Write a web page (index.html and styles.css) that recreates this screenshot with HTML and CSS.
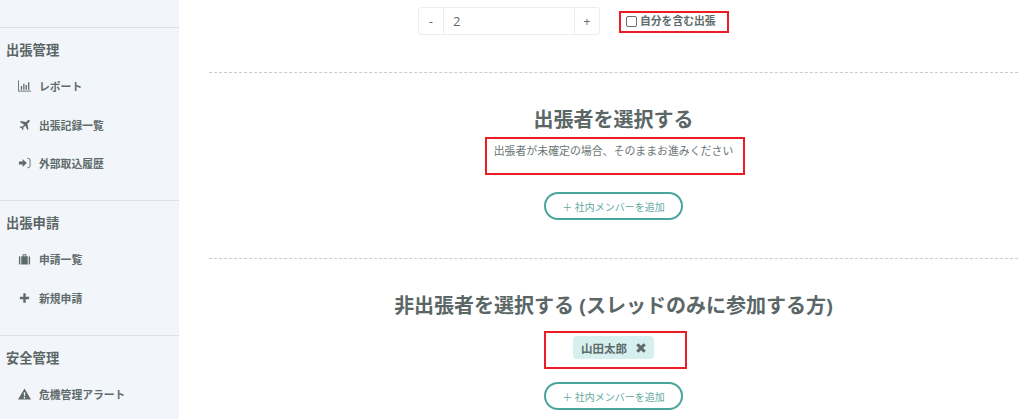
FILE: index.html
```html
<!DOCTYPE html>
<html lang="ja">
<head>
<meta charset="utf-8">
<title>出張者を選択する</title>
<link rel="stylesheet" href="styles.css">
</head>
<body>
<div class="app">
  <aside class="sidebar">
    <section class="group">
      <h3 class="group-title">出張管理</h3>
      <a class="item"><svg class="icon" viewBox="0 0 14 12"><path d="M.5 0v11.500H14" fill="none" stroke="currentColor"/><path d="M3 6h1.400v4H3zM5.600 3.500H7V10H5.600zM8.200 5h1.400v5H8.200zM10.800 2h1.400v8h-1.400z" fill="currentColor"/></svg>レポート</a>
      <a class="item"><svg class="icon" viewBox="0 0 14 14"><path d="M12.700 1.200c.7.700.3 1.800-.4 2.500L10.400 5.600l1.200 6-1.100 1.100-2.700-4.900-2.400 2.400.4 2-.9.900-1.200-2.400-2.400-1.200.9-.9 2 .4 2.400-2.400L1.700 3.500l1.100-1.100 6 1.200 1.900-1.900c.7-.7 1.300-1.200 2-.5z" fill="currentColor"/></svg>出張記録一覧</a>
      <a class="item"><svg class="icon" viewBox="0 0 14 12"><path d="M1 4.300h4V1.800l4.500 4.200L5 10.200V7.700H1z" fill="currentColor"/><path d="M10 1h1.200A1.800 1.800 0 0 1 13 2.800v6.400A1.800 1.800 0 0 1 11.200 11H10" fill="none" stroke="currentColor"/></svg>外部取込履歴</a>
    </section>
    <section class="group">
      <h3 class="group-title">出張申請</h3>
      <a class="item"><svg class="icon" viewBox="0 0 14 12"><path d="M5 1h4v2H8V2H6v1H5zM1 4a1 1 0 0 1 1-1h.5v9H2a1 1 0 0 1-1-1zM3.500 3h7v9h-7zM11.500 3h.5a1 1 0 0 1 1 1v7a1 1 0 0 1-1 1h-.5z" fill="currentColor"/></svg>申請一覧</a>
      <a class="item"><svg class="icon" viewBox="0 0 14 12"><path d="M5.700 1h2.600v3.700H12v2.600H8.300V11H5.700V7.300H2V4.700h3.700z" fill="currentColor"/></svg>新規申請</a>
    </section>
    <section class="group">
      <h3 class="group-title">安全管理</h3>
      <a class="item"><svg class="icon" viewBox="0 0 14 12"><path d="M7 0l7 12H0zM6.200 4l.2 4.500h1.200L7.800 4zm0 5.300v1.500h1.600V9.300z" fill="currentColor" fill-rule="evenodd"/></svg>危機管理アラート</a>
    </section>
  </aside>
  <main class="main">
    <div class="counter-row">
      <div class="counter">
        <span class="step">-</span>
        <span class="value">2</span>
        <span class="step">+</span>
      </div>
      <label class="check marked"><span class="box"></span>自分を含む出張</label>
    </div>
    <section class="block first">
      <h2 class="title">出張者を選択する</h2>
      <div class="note marked">出張者が未確定の場合、そのままお進みください</div>
      <button class="add">＋ 社内メンバーを追加</button>
    </section>
    <section class="block second">
      <h2 class="title">非出張者を選択する (スレッドのみに参加する方)</h2>
      <div class="chip-wrap marked"><span class="chip">山田太郎<svg class="x" viewBox="0 0 10 10"><path d="M1 2.800L2.800 1 5 3.200 7.200 1 9 2.800 6.800 5 9 7.200 7.200 9 5 6.800 2.800 9 1 7.200 3.200 5z" fill="currentColor"/></svg></span></div>
      <button class="add">＋ 社内メンバーを追加</button>
    </section>
  </main>
</div>
</body>
</html>
```

FILE: styles.css
```css
*, *::after { box-sizing: border-box; }
html, body { margin: 0; height: 419px; overflow: hidden; background: #fff; }
body {
  font-family: "Open Sans", "Noto Sans CJK JP", sans-serif;
  color: #5f6b6b;
}
.app { display: flex; height: 419px; }

.sidebar {
  width: 179px;
  flex: none;
  background: #f2f6fa;
  padding-top: 27px;
}
.group {
  border-top: 1px solid #dde2e6;
  padding: 12px 0 17.500px 6px;
}
.group-title {
  margin: 0 0 7px;
  font-size: 13.300px;
  line-height: 20px;
  font-weight: 700;
  color: #5b6666;
}
.item {
  display: flex;
  align-items: center;
  height: 38.500px;
  padding-left: 12px;
  font-size: 10.800px;
  font-weight: 700;
  color: #5f6b6b;
}
.icon { width: 13px; height: 12px; margin-right: 8px; flex: none; }

.main { flex: 1; padding: 7px 6px 0 30px; }
.counter-row {
  display: flex;
  align-items: flex-start;
  padding-left: 209px;
  height: 66px;
  border-bottom: 1px dashed #c8cccc;
}
.counter {
  display: flex;
  width: 182px;
  height: 28px;
  border: 1px solid #eceeee;
  border-radius: 3px;
  font-size: 12px;
}
.step {
  width: 24px;
  display: flex;
  align-items: center;
  justify-content: center;
  flex: none;
}
.value {
  flex: 1;
  display: flex;
  align-items: center;
  padding-left: 9px;
  font-size: 13px;
  border-left: 1px solid #eceeee;
  border-right: 1px solid #eceeee;
}
.check {
  display: flex;
  align-items: center;
  margin: 6px 0 0 26px;
  height: 13px;
  font-size: 10.800px;
  font-weight: 700;
}
.box {
  width: 11px;
  height: 11px;
  margin: 3px 3px 0 0;
  border: 1px solid #6d6d6d;
  border-radius: 2px;
  background: #fff;
}
.marked { position: relative; }
.marked::after {
  content: "";
  position: absolute;
  border: 2px solid #ee1c25;
  pointer-events: none;
}
.check::after { left: -7px; top: -2px; width: 110px; height: 22px; }
.note::after { left: -9px; top: -5px; width: 260px; height: 38px; }
.chip-wrap::after { left: -29px; top: -5px; width: 143px; height: 38px; }

.block {
  display: flex;
  flex-direction: column;
  align-items: center;
}
.first { height: 186px; padding-top: 33px; border-bottom: 1px dashed #c8cccc; }
.second { padding-top: 33px; }
.title {
  margin: 0;
  font-size: 20px;
  line-height: 28px;
  font-weight: 700;
  color: #5b6666;
}
.note {
  margin-top: 8px;
  font-size: 10.900px;
  line-height: 18px;
  color: #6b7575;
}
.add {
  width: 139px;
  height: 28px;
  margin-top: 32px;
  padding: 0;
  border: 2px solid #4aa59a;
  border-radius: 14px;
  background: #fff;
  font: 400 10px "Open Sans", "Noto Sans CJK JP", sans-serif;
  color: #62a9a1;
}
.chip-wrap { margin-top: 16px; }
.chip {
  display: flex;
  align-items: center;
  justify-content: space-between;
  width: 81px;
  height: 23px;
  padding: 0 7px 0 8px;
  border-radius: 4px;
  background: #d6f0f0;
  font-size: 11.500px;
  font-weight: 700;
}
.x { width: 12px; height: 12px; }
.second .add { margin-top: 23px; }
```
